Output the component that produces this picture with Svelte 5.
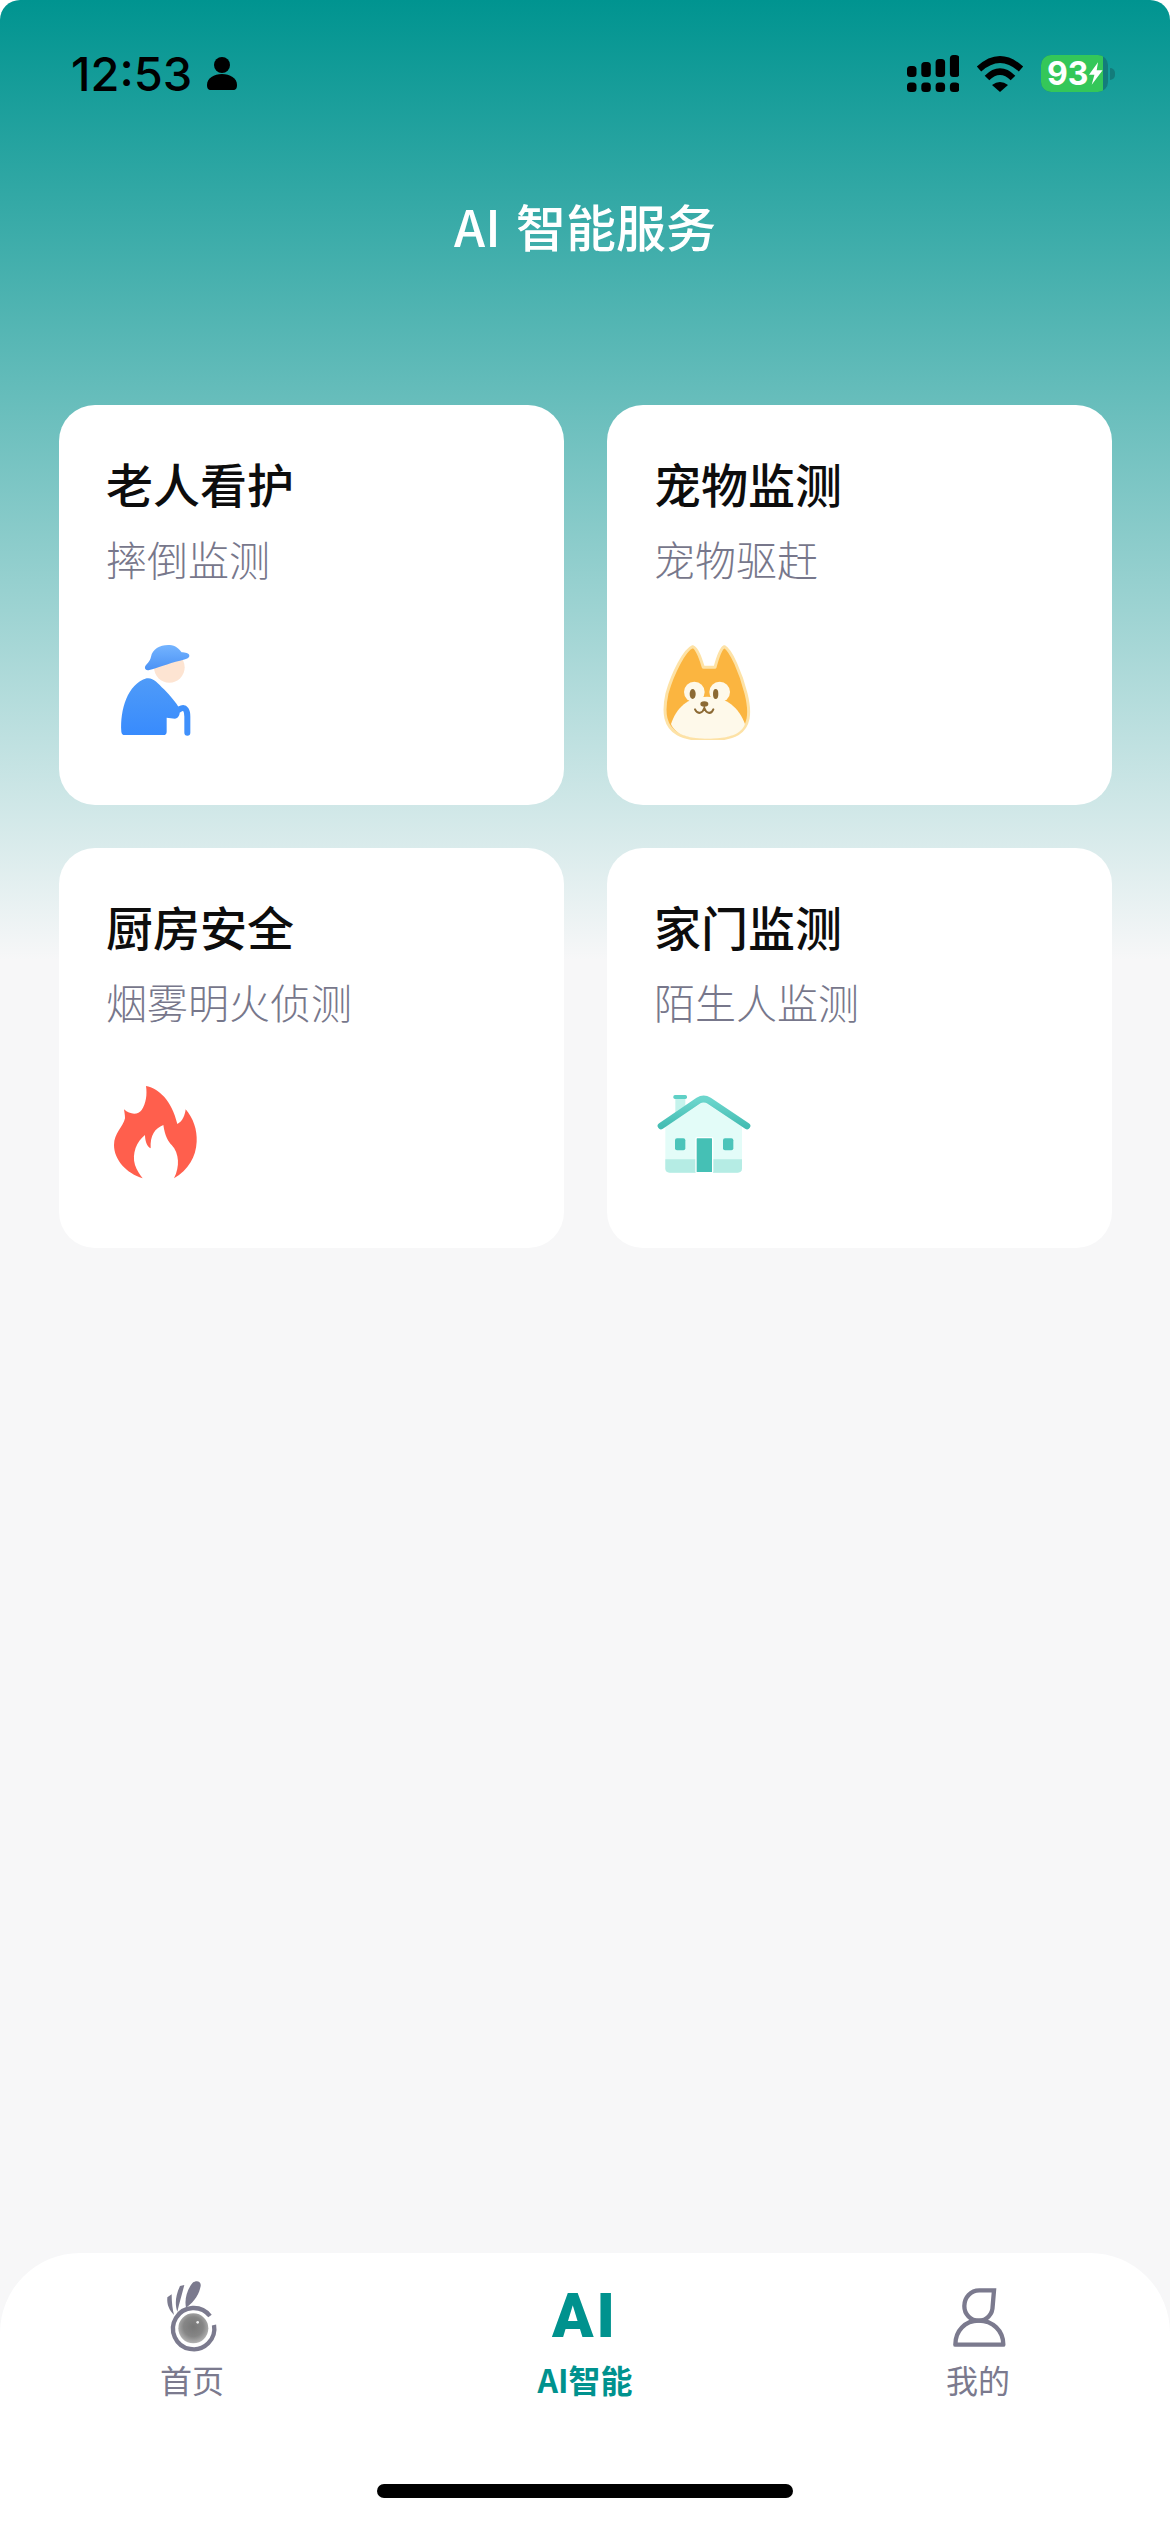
<script>
  const cards = [
    { title: '老人看护', sub: '摔倒监测', icon: 'elder' },
    { title: '宠物监测', sub: '宠物驱赶', icon: 'pet' },
    { title: '厨房安全', sub: '烟雾明火侦测', icon: 'fire' },
    { title: '家门监测', sub: '陌生人监测', icon: 'house' }
  ];
  const signalBars = [11, 15, 18, 22];
</script>

<div class="page">
  <div class="status">
    <div class="time">
      <span>12:53</span>
      <svg width="30" height="33" viewBox="0 0 30 33">
        <circle cx="15" cy="8" r="8" fill="#000" />
        <path d="M0 28C0 21 7 17 15 17S30 21 30 28C30 31 29 33 26 33H4C1 33 0 31 0 28Z" fill="#000" />
      </svg>
    </div>
    <div class="status-right">
      <svg width="52" height="37" viewBox="0 0 52 37">
        {#each signalBars as h, i}
          <rect x={i * 14.3} y={22 - h} width="9.5" height={h} rx="3.5" fill="#000" />
          <rect x={i * 14.3} y="27.5" width="9.5" height="9.5" rx="3.5" fill="#000" />
        {/each}
      </svg>
      <svg width="48" height="37" viewBox="0 0 48 37">
        <path d="M3 14Q24 -5 45 14" fill="none" stroke="#000" stroke-width="6.5" />
        <path d="M11 23Q24 10 37 23" fill="none" stroke="#000" stroke-width="6.5" />
        <path d="M16 30Q24 24 32 30L24 37Z" fill="#000" />
      </svg>
      <div class="battery">
        <div class="battery-body">
          <div class="battery-fill">
            <span>93</span>
            <svg width="15" height="25" viewBox="0 0 15 25">
              <path d="M10 0L0 14H6L3 25L15 9H8.5Z" fill="#fff" />
            </svg>
          </div>
        </div>
        <div class="battery-nub"></div>
      </div>
    </div>
  </div>

  <h1>AI 智能服务</h1>

  <div class="grid">
    {#each cards as card}
      <div class="card">
        <div class="card-title">{card.title}</div>
        <div class="card-sub">{card.sub}</div>
        {#if card.icon === 'elder'}
          <svg class="card-icon" viewBox="51 60 330 300">
            <defs>
              <linearGradient id="hat" x1="0" y1="0" x2="0" y2="1">
                <stop offset="0" stop-color="#74b4ff" />
                <stop offset="1" stop-color="#4b92f5" />
              </linearGradient>
              <linearGradient id="coat" x1="0" y1="0" x2="0" y2="1">
                <stop offset="0" stop-color="#4f9bf8" />
                <stop offset="1" stop-color="#388bfd" />
              </linearGradient>
            </defs>
            <circle cx="238" cy="142" r="46" fill="#fde4d2" />
            <path d="M165 140C170 130 180 125 183 110C188 85 215 72 245 76C262 79 270 92 275 97C285 97 298 100 298 107C298 115 285 118 270 122C235 130 200 145 178 150C170 152 163 148 165 140Z" fill="url(#hat)" />
            <path d="M268 268C288 256 292 275 292 290V338" fill="none" stroke="#3f90fb" stroke-width="18" stroke-linecap="round" />
            <path d="M94 335C90 270 112 192 170 175C190 172 202 188 222 208C242 228 258 248 268 265C272 278 268 295 255 296L230 293V335Q230 345 220 345H104Q95 345 94 335Z" fill="url(#coat)" />
          </svg>
        {:else if card.icon === 'pet'}
          <svg class="card-icon" viewBox="42 30 330 300">
            <path d="M155 50C170 55 180 90 187 112L222 112C228 90 238 55 250 50C270 60 300 130 315 190C330 250 325 290 290 312C250 335 150 335 110 312C72 290 65 250 78 190C95 130 130 60 155 50Z" fill="#fbb540" stroke="#fde2a6" stroke-width="9" stroke-linejoin="round" />
            <circle cx="160" cy="186" r="31" fill="#fef9ea" />
            <circle cx="236" cy="186" r="31" fill="#fef9ea" />
            <path d="M90 282C105 235 140 200 198 200C258 200 295 235 312 282C300 318 250 326 200 326C150 326 105 318 90 282Z" fill="#fef9ea" />
            <ellipse cx="155" cy="192" rx="9" ry="15" fill="#8c6a34" />
            <ellipse cx="224" cy="192" rx="8" ry="15" fill="#8c6a34" />
            <ellipse cx="190" cy="222" rx="12" ry="8" fill="#8c6a34" />
            <path d="M162 238C170 255 185 250 190 234C195 250 210 255 217 238" fill="none" stroke="#8c6a34" stroke-width="6" stroke-linecap="round" />
          </svg>
        {:else if card.icon === 'fire'}
          <svg class="card-icon" viewBox="21 39 330 300">
            <path d="M138 48C175 55 215 90 232 162C248 155 255 135 257 118C280 145 292 180 290 215C288 260 265 300 222 325C240 290 238 250 215 225C205 215 195 200 190 165C165 175 150 195 152 235C140 230 135 210 135 195C110 215 95 250 105 285C110 300 120 315 128 325C80 310 42 270 42 225C42 190 70 170 75 145C75 135 73 125 72 118C90 135 115 135 125 120C138 100 142 75 138 48Z" fill="#ff5f4d" />
          </svg>
        {:else}
          <svg class="card-icon" viewBox="42 9 330 300">
            <defs>
              <linearGradient id="roof" x1="0" y1="0" x2="0" y2="1">
                <stop offset="0" stop-color="#6cd6cd" />
                <stop offset="1" stop-color="#45bdb3" />
              </linearGradient>
            </defs>
            <rect x="103" y="50" width="30" height="50" fill="#c5f3ec" />
            <rect x="97" y="45" width="41" height="12" rx="5" fill="#5fd0c6" />
            <path d="M73 140L188 65L303 140V265Q303 278 290 278H86Q73 278 73 265Z" fill="#e3fcf8" />
            <path d="M73 238H303V265Q303 278 290 278H86Q73 278 73 265Z" fill="#b5ece4" />
            <path d="M60 138L172 62Q188 52 204 62L318 138" fill="none" stroke="url(#roof)" stroke-width="20" stroke-linecap="round" />
            <rect x="102" y="175" width="31" height="36" rx="6" fill="#4cc4ba" />
            <rect x="246" y="175" width="31" height="36" rx="6" fill="#4cc4ba" />
            <rect x="165" y="173" width="50" height="105" rx="3" fill="#45c0b5" stroke="#fff" stroke-width="4" />
          </svg>
        {/if}
      </div>
    {/each}
  </div>

  <div class="tabbar">
    <div class="tabs">
      <div class="tab">
        <svg class="tab-icon" viewBox="66 48 240 240">
          <defs>
            <radialGradient id="lens" cx="0.5" cy="0.45" r="0.6">
              <stop offset="0" stop-color="#777" />
              <stop offset="0.55" stop-color="#868686" />
              <stop offset="1" stop-color="#bdbdbd" />
            </radialGradient>
          </defs>
          <path d="M188 68C198 60 214 62 212 78C208 100 195 125 168 143C163 120 170 90 188 68Z" fill="#7b7a8e" />
          <path d="M150 78L163 75C155 105 148 130 142 155C135 135 135 110 150 78Z" fill="#7b7a8e" />
          <path d="M112 112L125 103C125 130 128 150 132 165C118 150 110 135 112 112Z" fill="#7b7a8e" />
          <path d="M240 168A62 62 0 1 0 252 195" fill="none" stroke="#7b7a8e" stroke-width="13" />
          <circle cx="190" cy="205" r="45" fill="url(#lens)" />
          <circle cx="203" cy="187" r="4" fill="#eee" />
        </svg>
        <span>首页</span>
      </div>
      <div class="tab active">
        <div class="ai-mark">AI</div>
        <span>AI智能</span>
      </div>
      <div class="tab">
        <svg class="tab-icon" viewBox="54 18 240 240">
          <path d="M222 61H178C152 61 133 82 133 108C133 133 152 152 176 152C200 152 218 133 218 108Z" fill="none" stroke="#7b7a8e" stroke-width="13" stroke-linejoin="miter" />
          <path d="M106 224C106 182 135 152 176 152C218 152 250 182 250 224Z" fill="none" stroke="#7b7a8e" stroke-width="13" stroke-linejoin="round" />
        </svg>
        <span>我的</span>
      </div>
    </div>
    <div class="home-bar"></div>
  </div>
</div>

<style>
  :global(body) {
    margin: 0;
    background: #fff;
  }
  .page {
    display: flex;
    flex-direction: column;
    height: 2532px;
    overflow: hidden;
    border-radius: 20px 20px 0 0;
    background: linear-gradient(#009490 0, #f7f7f8 960px);
    font-family: "Noto Sans CJK SC", "Noto Sans", sans-serif;
  }
  .status {
    display: flex;
    justify-content: space-between;
    align-items: center;
    height: 37px;
    padding: 55px 55px 0 71px;
  }
  .time {
    display: flex;
    align-items: center;
    gap: 15px;
    font-family: Inter, sans-serif;
    font-weight: 500;
    font-size: 47px;
    color: #000;
  }
  .status-right {
    display: flex;
    align-items: center;
    gap: 17px;
  }
  .battery {
    display: flex;
    align-items: center;
    gap: 2px;
  }
  .battery-body {
    width: 67px;
    height: 37px;
    border-radius: 10px;
    background: #137c7b;
    overflow: hidden;
  }
  .battery-fill {
    display: flex;
    align-items: center;
    gap: 1px;
    width: 62px;
    height: 37px;
    padding-left: 6px;
    box-sizing: border-box;
    background: #34c759;
    color: #fff;
    font-family: Inter, sans-serif;
    font-weight: 700;
    font-size: 32px;
  }
  .battery-nub {
    width: 5px;
    height: 12px;
    border-radius: 0 6px 6px 0;
    background: #137c7b;
  }
  h1 {
    margin: 0;
    padding-top: 98px;
    text-align: center;
    color: #fff;
    font-size: 50px;
    font-weight: 500;
    line-height: 70px;
    word-spacing: 4px;
  }
  .grid {
    display: grid;
    grid-template-columns: 505px 505px;
    gap: 43px 43px;
    padding: 145px 58px 0 59px;
  }
  .card {
    display: flex;
    flex-direction: column;
    height: 400px;
    box-sizing: border-box;
    padding: 45px 47px 0;
    border-radius: 36px;
    background: #fff;
  }
  .card-title {
    color: #0d0d0d;
    font-size: 47px;
    font-weight: 500;
    line-height: 66px;
  }
  .card-sub {
    margin-top: 13px;
    color: #77778b;
    font-size: 41px;
    font-weight: 300;
    line-height: 58px;
  }
  .card-icon {
    width: 110px;
    height: 100px;
    margin-top: 53px;
    margin-left: 1px;
  }
  .tabbar {
    display: flex;
    flex-direction: column;
    align-items: center;
    height: 279px;
    box-sizing: border-box;
    margin-top: auto;
    padding: 23px 0 34px;
    border-radius: 80px 80px 0 0;
    background: #fff;
  }
  .tabs {
    display: flex;
    justify-content: center;
    gap: 273px;
  }
  .tab {
    display: flex;
    flex-direction: column;
    align-items: center;
    width: 120px;
    color: #7b7a8e;
    font-size: 32px;
    line-height: 46px;
  }
  .tab.active {
    color: #00928e;
    font-weight: 700;
  }
  .tab-icon {
    width: 80px;
    height: 80px;
    display: block;
  }
  .ai-mark {
    height: 80px;
    font-family: Roboto, sans-serif;
    font-weight: 900;
    font-size: 61px;
    line-height: 80px;
    letter-spacing: 3px;
  }
  .home-bar {
    width: 416px;
    height: 14px;
    margin-top: auto;
    border-radius: 7px;
    background: #000;
  }
</style>
